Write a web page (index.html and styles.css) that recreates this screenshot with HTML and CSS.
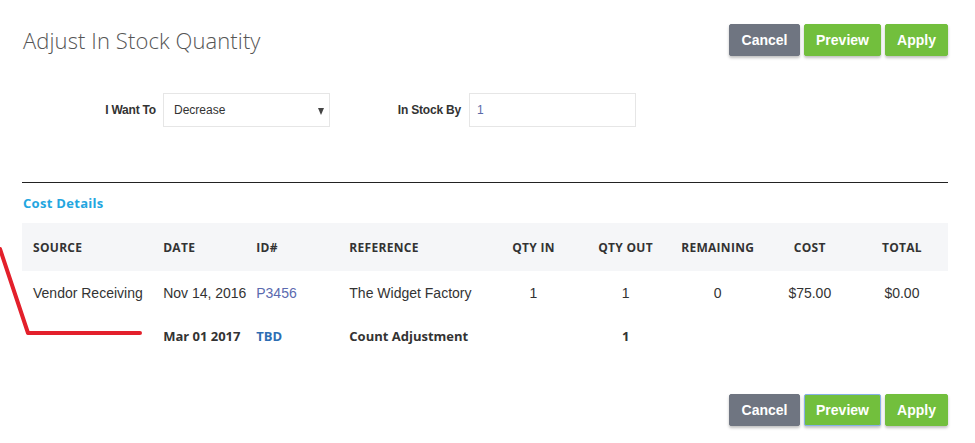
FILE: index.html
```html
<!DOCTYPE html>
<html>
<head>
<meta charset="utf-8">
<link rel="stylesheet" href="styles.css">
</head>
<body>
<div class="page">
  <div class="header">
    <h1 class="title">Adjust In Stock Quantity</h1>
    <div class="actions">
      <button class="btn btn-cancel">Cancel</button>
      <button class="btn btn-green">Preview</button>
      <button class="btn btn-green">Apply</button>
    </div>
  </div>

  <div class="form-row">
    <label class="lbl lbl-1">I Want To</label>
    <div class="select">Decrease<span class="caret"></span></div>
    <label class="lbl lbl-2">In Stock By</label>
    <div class="input">1</div>
  </div>

  <hr class="rule">

  <h2 class="section">Cost Details</h2>

  <table class="grid">
    <colgroup>
      <col class="c-src"><col class="c-date"><col class="c-id"><col class="c-ref">
      <col class="c-num"><col class="c-num"><col class="c-num"><col class="c-num"><col class="c-num">
    </colgroup>
    <thead>
      <tr>
        <th>SOURCE</th><th>DATE</th><th>ID#</th><th>REFERENCE</th>
        <th class="ctr">QTY IN</th><th class="ctr">QTY OUT</th><th class="ctr">REMAINING</th><th class="ctr">COST</th><th class="ctr">TOTAL</th>
      </tr>
    </thead>
    <tbody>
      <tr>
        <td>Vendor Receiving</td><td>Nov 14, 2016</td><td class="link">P3456</td><td>The Widget Factory</td>
        <td class="ctr">1</td><td class="ctr">1</td><td class="ctr">0</td><td class="ctr">$75.00</td><td class="ctr">$0.00</td>
      </tr>
      <tr class="pending">
        <td></td><td>Mar 01 2017</td><td class="link-b">TBD</td><td>Count Adjustment</td>
        <td class="ctr"></td><td class="ctr">1</td><td class="ctr"></td><td class="ctr"></td><td class="ctr"></td>
      </tr>
    </tbody>
  </table>

  <div class="footer">
    <div class="actions">
      <button class="btn btn-cancel">Cancel</button>
      <button class="btn btn-green btn-focus">Preview</button>
      <button class="btn btn-green">Apply</button>
    </div>
  </div>
</div>
<svg class="annot" width="975" height="443" viewBox="0 0 975 443">
  <polyline points="0,249 28,333 140,333" fill="none" stroke="#e3202b" stroke-width="4" stroke-linejoin="round" stroke-linecap="round"/>
</svg>
</body>
</html>
```

FILE: styles.css
```css
html, body { margin: 0; padding: 0; background: #fff; }
body { position: relative; width: 975px; height: 443px; overflow: hidden; font-family: "Liberation Sans", Arial, sans-serif; color: #333; }
.page { padding: 24px 27px 0 22px; }

.header { display: flex; align-items: center; justify-content: space-between; height: 32px; }
.title { margin: 0 0 0 1px; font-family: "Open Sans", sans-serif; font-weight: 300; font-size: 22px; color: #555; line-height: 32px; letter-spacing: 0.1px; }

.actions { display: flex; gap: 4px; }
.btn { height: 32px; border: 1px solid transparent; border-radius: 2px; color: #fff; font-family: "Liberation Sans", Arial, sans-serif; font-weight: bold; font-size: 14px; padding: 0; box-shadow: 0 2px 3px rgba(0,0,0,0.25); cursor: pointer; }
.btn-cancel { background: #6f7581; border-color: #6f7581; width: 71px; }
.btn-green { background: #72bf3d; border-color: #72bf3d; }
.actions .btn-green:nth-child(2) { width: 77px; }
.actions .btn-green:nth-child(3) { width: 63px; }
.btn-focus { border-color: #86b0e6; }

.form-row { display: flex; align-items: center; margin-top: 37px; height: 34px; }
.lbl { font-weight: bold; font-size: 12px; color: #333; text-align: right; letter-spacing: -0.2px; }
.lbl-1 { width: 134px; }
.lbl-2 { width: 131px; }
.select, .input { box-sizing: border-box; height: 34px; border: 1px solid #e6e6e6; font-size: 12px; display: flex; align-items: center; padding-left: 10px; }
.select { width: 167px; margin-left: 7px; position: relative; color: #333; }
.input { width: 167px; margin-left: 8px; color: #5a6aa8; padding-left: 7px; }
.caret { position: absolute; right: 5px; top: 14px; width: 0; height: 0; border-left: 3.5px solid transparent; border-right: 3.5px solid transparent; border-top: 7px solid #444; }

.rule { margin: 55px 0 0 0; border: 0; border-top: 1px solid #222; height: 0; }

.section { margin: 11px 0 0 1px; font-family: "Open Sans", sans-serif; font-weight: bold; font-size: 13px; line-height: 18px; color: #23a6e0; letter-spacing: 0.3px; }

.grid { margin-top: 11px; width: 926px; border-collapse: collapse; table-layout: fixed; }
.c-src { width: 130px; }
.c-date { width: 93px; }
.c-id { width: 93px; }
.c-ref { width: 149px; }
.c-num { width: 92px; }
.grid th { background: #f5f6f8; height: 48px; padding: 0 0 0 11px; text-align: left; font-family: "Open Sans", sans-serif; font-weight: bold; font-size: 12px; color: #333; letter-spacing: 0.3px; }
.grid td { height: 43px; padding: 0 0 0 11px; font-size: 14px; color: #333; white-space: nowrap; }
.grid th.ctr, .grid td.ctr { text-align: center; padding: 0; }
.grid td.link { color: #5b6aaf; }
.pending td { font-family: "Open Sans", sans-serif; font-weight: bold; font-size: 13px; height: 44px; }
.pending td.link-b { color: #2d6db3; }

.footer { display: flex; justify-content: flex-end; margin-top: 36px; }

.annot { position: absolute; left: 0; top: 0; pointer-events: none; }
```
